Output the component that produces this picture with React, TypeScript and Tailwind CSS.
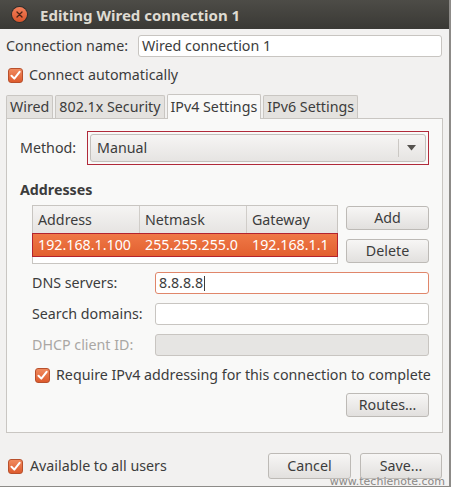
import React from 'react';

function Check() {
  return (
    <span className="inline-flex h-[15px] w-[15px] shrink-0 items-center justify-center rounded-[3px] border border-[#b8502c] bg-gradient-to-b from-[#f08a5e] to-[#dd5a2c]">
      <svg width="11" height="11" viewBox="0 0 11 11">
        <path d="M1.5 5.8 L4.3 8.6 L9.6 1.8" fill="none" stroke="#fff" strokeWidth="2" strokeLinecap="round" strokeLinejoin="round" />
      </svg>
    </span>
  );
}

function Button({ children, className = '' }: { children: React.ReactNode; className?: string }) {
  return (
    <div className={`flex items-center justify-center rounded-[3px] border border-[#bdbab6] bg-gradient-to-b from-[#f7f6f5] to-[#e2e0de] text-[#3c3c3c] ${className}`}>
      {children}
    </div>
  );
}

function Field({ value = '', focused = false, disabled = false }: { value?: string; focused?: boolean; disabled?: boolean }) {
  const border = focused ? 'border-[#e0866a]' : 'border-[#c8c5c1]';
  const bg = disabled ? 'bg-[#e6e5e3]' : 'bg-white';
  return (
    <div className={`flex h-[22px] flex-1 items-center rounded-[3px] border ${border} ${bg} pl-[3px]`}>
      {value}
      {focused && <span className="ml-[1px] h-[15px] w-px bg-[#3c3c3c]" />}
    </div>
  );
}

export default function App() {
  const tabs = ['Wired', '802.1x Security', 'IPv4 Settings', 'IPv6 Settings'];

  return (
    <div className="relative flex h-[487px] w-[451px] flex-col overflow-hidden border-r-2 border-b border-[#8d8b88] bg-[#f2f1f0] font-['Noto_Sans',sans-serif] text-[14.25px] leading-[18px] text-[#3c3c3c]">
      {/* title bar */}
      <div className="flex h-[29px] shrink-0 items-center bg-gradient-to-b from-[#4d4c47] to-[#3a3935]">
        <div className="ml-[12px] flex h-[15px] w-[15px] items-center justify-center rounded-full bg-gradient-to-b from-[#f4805a] to-[#d9542a] shadow-[0_0_0_1px_#2f2e2b]">
          <svg width="7" height="7" viewBox="0 0 7 7">
            <path d="M1 1 L6 6 M6 1 L1 6" stroke="#4a2315" strokeWidth="1.3" strokeLinecap="round" />
          </svg>
        </div>
        <span className="ml-[13px] text-[15px] font-bold text-[#dfdbd2]">Editing Wired connection 1</span>
      </div>

      {/* connection name */}
      <div className="mt-[6px] flex items-center pl-[6px] pr-[7px]">
        <span className="w-[132px]">Connection name:</span>
        <Field value="Wired connection 1" />
      </div>

      <div className="mt-[9px] flex h-[18px] items-center gap-[6px] pl-[8px]">
        <Check />
        <span>Connect automatically</span>
      </div>

      {/* tabs */}
      <div className="mt-[10px] flex h-[24px] items-end gap-[2px] pl-[6px]">
        {tabs.map((t) =>
          t === 'IPv4 Settings' ? (
            <div key={t} className="relative z-10 -mb-px flex h-[25px] items-center rounded-t-[2px] border border-b-0 border-[#c9c6c2] bg-[#f9f9f8] px-[3px]">
              {t}
            </div>
          ) : (
            <div key={t} className="flex h-[23px] items-center rounded-t-[2px] border border-b-0 border-[#c9c6c2] bg-[#e4e2df] px-[3px]">
              {t}
            </div>
          )
        )}
      </div>

      {/* panel */}
      <div className="mx-[6px] flex h-[315px] flex-col border border-[#c9c6c2] bg-[#f9f9f8] pl-[13px] pr-[13px]">
        <div className="mt-[12px] flex items-center">
          <span className="w-[67px]">Method:</span>
          <div className="flex-1 border border-[#b02a3a] p-[2px]">
            <div className="flex h-[28px] items-center rounded-[3px] border border-[#c3c0bc] bg-gradient-to-b from-[#f6f5f4] to-[#e6e4e2] pl-[6px]">
              <span className="flex-1">Manual</span>
              <span className="h-[18px] w-px bg-[#cbc8c4]" />
              <svg width="26" height="10" viewBox="0 0 26 10">
                <path d="M8 2 L17 2 L12.5 7.5 Z" fill="#55524e" />
              </svg>
            </div>
          </div>
        </div>

        <div className="mt-[16px] font-bold">Addresses</div>

        <div className="mt-[6px] flex pl-[12px]">
          <div className="flex h-[59px] w-[306px] flex-col border border-[#c8c5c1] bg-white">
            <div className="flex h-[27px] shrink-0 bg-gradient-to-b from-[#f5f4f3] to-[#e6e4e2]">
              <div className="flex w-[107px] items-center border-r border-[#d0cdc9] pl-[5px]">Address</div>
              <div className="flex w-[107px] items-center border-r border-[#d0cdc9] pl-[5px]">Netmask</div>
              <div className="flex flex-1 items-center pl-[5px]">Gateway</div>
            </div>
            <div className="-mx-px flex h-[24px] items-center border border-[#b3232e] bg-gradient-to-b from-[#ef7846] to-[#e2602f] text-white">
              <span className="w-[107px] pl-[5px]">192.168.1.100</span>
              <span className="w-[107px] pl-[5px]">255.255.255.0</span>
              <span className="pl-[5px]">192.168.1.1</span>
            </div>
          </div>
          <div className="ml-auto mt-px flex flex-col gap-[9px]">
            <Button className="h-[24px] w-[83px]">Add</Button>
            <Button className="h-[24px] w-[83px]">Delete</Button>
          </div>
        </div>

        <div className="mt-[8px] flex items-center pl-[12px]">
          <span className="w-[123px]">DNS servers:</span>
          <Field value="8.8.8.8" focused />
        </div>
        <div className="mt-[9px] flex items-center pl-[12px]">
          <span className="w-[123px]">Search domains:</span>
          <Field />
        </div>
        <div className="mt-[9px] flex items-center pl-[12px]">
          <span className="w-[123px] text-[#a9a7a4]">DHCP client ID:</span>
          <Field disabled />
        </div>

        <div className="mt-[10px] flex h-[18px] items-center gap-[6px] pl-[15px]">
          <Check />
          <span className="whitespace-nowrap">Require IPv4 addressing for this connection to complete</span>
        </div>

        <div className="mt-[9px] flex justify-end">
          <Button className="h-[24px] w-[83px]">Routes…</Button>
        </div>
      </div>

      {/* bottom */}
      <div className="mt-[20px] flex items-center pl-[8px] pr-[7px]">
        <Check />
        <span className="ml-[7px] flex-1">Available to all users</span>
        <Button className="h-[26px] w-[83px]">Cancel</Button>
        <Button className="ml-[9px] h-[26px] w-[82px]">Save...</Button>
      </div>

      <span className="absolute right-[4px] bottom-[-2px] font-['DejaVu_Sans',sans-serif] text-[11px] leading-[13px] text-[#8a8886]">www.techienote.com</span>
    </div>
  );
}
